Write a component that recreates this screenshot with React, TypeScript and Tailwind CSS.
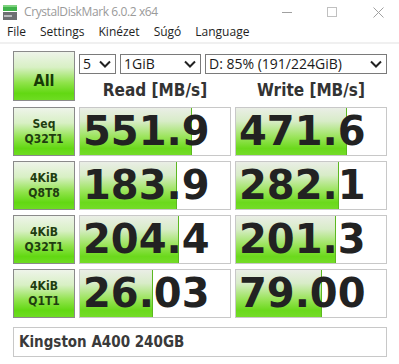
import React from "react";

const rows = [
  { l1: "Seq", l2: "Q32T1", read: "551.9", rw: 112, write: "471.6", ww: 111 },
  { l1: "4KiB", l2: "Q8T8", read: "183.9", rw: 97, write: "282.1", ww: 103 },
  { l1: "4KiB", l2: "Q32T1", read: "204.4", rw: 99, write: "201.3", ww: 100 },
  { l1: "4KiB", l2: "Q1T1", read: "26.03", rw: 73, write: "79.00", ww: 86 },
];

const green =
  "bg-[linear-gradient(to_bottom,#eef4ea_0%,#d8f0c4_32%,#8fe34a_64%,#62d812_86%,#6edc22_100%)]";
const bar =
  "bg-[linear-gradient(to_bottom,#eaeee6_0%,#d8ecc8_28%,#9ae45a_62%,#6bd91c_86%,#74dc28_100%)]";

function Chevron() {
  return (
    <svg width="12" height="8" viewBox="0 0 12 8" className="shrink-0">
      <polyline points="1,1.5 6,6.5 11,1.5" fill="none" stroke="#222" strokeWidth="2" />
    </svg>
  );
}

function Select({ w, text }: { w: string; text: string }) {
  return (
    <div
      className={`${w} h-[20px] border border-[#7a7a7a] bg-white flex items-center justify-between pl-[3px] pr-[4px] font-['Open_Sans',sans-serif] text-[14px] text-[#1a1a1a] leading-none`}
    >
      <span>{text}</span>
      <Chevron />
    </div>
  );
}

function ValueBox({ value, width }: { value: string; width: number }) {
  return (
    <div className="relative h-[49px] border border-[#c8c8c8] bg-white overflow-hidden">
      <div
        className={`absolute left-0 top-0 bottom-0 ${bar} border-r border-[#5cb820]`}
        style={{ width }}
      />
      <span className="relative block pl-[3px] pt-[1px] font-['DejaVu_Sans',sans-serif] font-bold text-[40px] leading-[45px] text-[#222]">
        {value}
      </span>
    </div>
  );
}

export default function App() {
  return (
    <div className="w-[399px] h-[364px] bg-white overflow-hidden select-none">
      {/* Title bar */}
      <div className="relative h-[22px] flex items-center">
        <svg width="15" height="16" viewBox="0 0 15 16" className="ml-[3px] mt-[2px]">
          <rect x="0" y="1" width="14" height="6" fill="#3fb24a" />
          <rect x="0" y="1" width="14" height="2" fill="#7fd27f" />
          <rect x="0" y="8" width="14" height="8" fill="#6d6f72" />
          <rect x="1" y="11" width="8" height="2" fill="#b9bbbe" />
        </svg>
        <span className="ml-[6px] mt-[1px] font-['Open_Sans',sans-serif] text-[12px] tracking-[-0.4px] text-[#9a9a9a]">
          CrystalDiskMark 6.0.2 x64
        </span>
        <div className="absolute left-[282px] top-[12px] w-[10px] h-px bg-[#a0a0a0]" />
        <div className="absolute left-[327px] top-[7px] w-[10px] h-[10px] border border-[#c0c0c0]" />
        <svg width="11" height="11" viewBox="0 0 11 11" className="absolute left-[373px] top-[7px]">
          <path d="M0.5 0.5 L10.5 10.5 M10.5 0.5 L0.5 10.5" stroke="#a0a0a0" strokeWidth="1" />
        </svg>
      </div>

      {/* Menu */}
      <div className="h-[22px] flex items-center pl-[7px] gap-[14px] font-['Open_Sans',sans-serif] text-[12px] text-[#1e1e1e] border-b-2 border-[#f0f0f0]">
        <span>File</span>
        <span>Settings</span>
        <span>Kinézet</span>
        <span>Súgó</span>
        <span>Language</span>
      </div>

      <div className="pl-[13px] pt-[7px]">
        {/* Top controls */}
        <div className="flex gap-[4px]">
          <div
            className={`w-[62px] h-[50px] border border-[#8a8a8a] ${green} flex items-center justify-center pt-[10px] font-['DejaVu_Sans_Condensed','DejaVu_Sans',sans-serif] font-bold text-[16px] text-[#173a06]`}
          >
            All
          </div>
          <div className="flex flex-col">
            <div className="flex gap-[4px] mt-[3px]">
              <Select w="w-[37px]" text="5" />
              <Select w="w-[81px]" text="1GiB" />
              <Select w="w-[182px]" text="D: 85% (191/224GiB)" />
            </div>
            <div className="flex gap-[4px] mt-[4px] font-['DejaVu_Sans_Condensed','DejaVu_Sans',sans-serif] font-bold text-[17px] text-[#333] leading-[24px]">
              <div className="w-[152px] text-center">Read [MB/s]</div>
              <div className="w-[152px] text-center">Write [MB/s]</div>
            </div>
          </div>
        </div>

        {/* Result rows */}
        {rows.map((r, i) => (
          <div key={i} className="grid grid-cols-[62px_152px_152px] gap-x-[4px] mt-[5px]">
            <div
              className={`h-[49px] border border-[#8a8a8a] ${green} flex flex-col items-center justify-center font-['DejaVu_Sans_Condensed','DejaVu_Sans',sans-serif] font-bold text-[12px] leading-[15px] text-[#1f3d10]`}
            >
              <span>{r.l1}</span>
              <span>{r.l2}</span>
            </div>
            <ValueBox value={r.read} width={r.rw} />
            <ValueBox value={r.write} width={r.ww} />
          </div>
        ))}

        {/* Drive name */}
        <div className="mt-[9px] w-[374px] h-[30px] border border-[#c8c8c8] bg-white flex items-center pl-[5px] font-['DejaVu_Sans_Condensed','DejaVu_Sans',sans-serif] font-bold text-[15px] text-[#3a3a3a]">
          Kingston A400 240GB
        </div>
      </div>
    </div>
  );
}
